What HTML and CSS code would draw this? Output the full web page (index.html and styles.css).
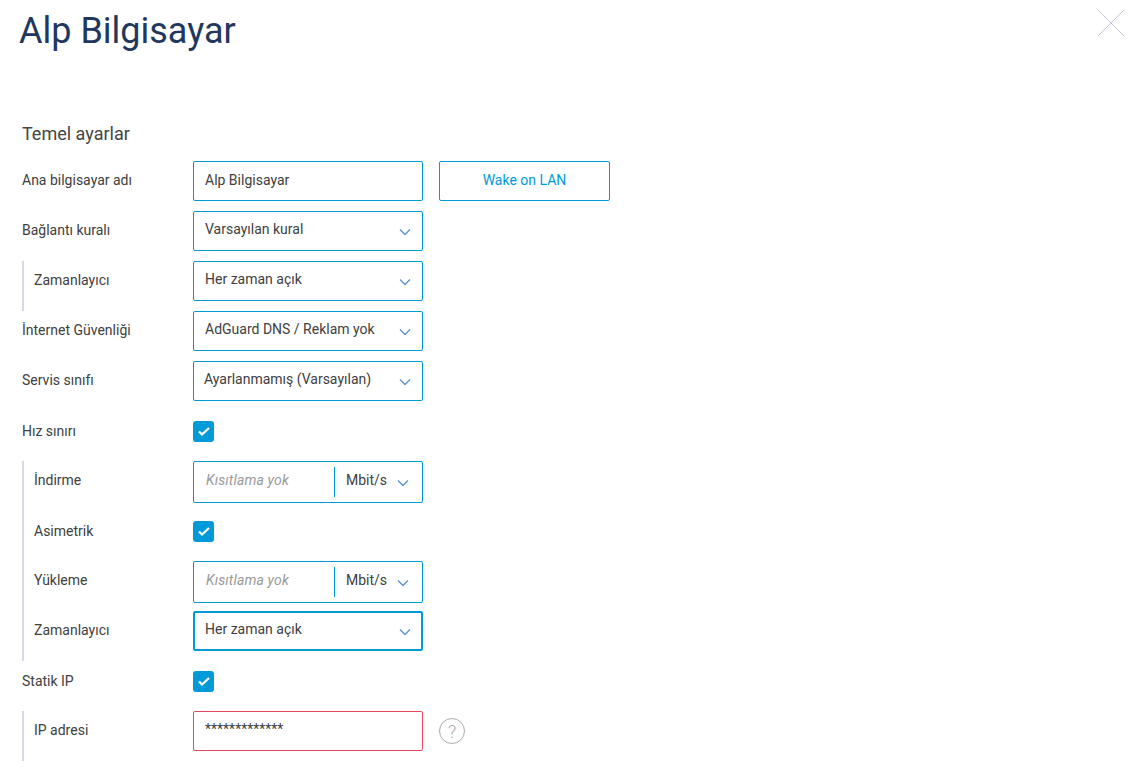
FILE: index.html
```html
<!DOCTYPE html>
<html lang="tr">
<head>
    <meta charset="UTF-8">
    <meta name="viewport" content="width=device-width, initial-scale=1.0">
    <title>Alp Bilgisayar</title>
    <link rel="stylesheet" href="styles.css">
</head>
<body>
    <header class="header">
        <h1>Alp Bilgisayar</h1>
        <button class="close" aria-label="Kapat">
            <svg width="28" height="28" viewBox="0 0 28 28"><path d="M1 1 27 27M27 1 1 27"/></svg>
        </button>
    </header>

    <h2>Temel ayarlar</h2>

    <div class="row">
        <label>Ana bilgisayar adı</label>
        <input class="field" type="text" value="Alp Bilgisayar">
        <button class="btn">Wake on LAN</button>
    </div>
    <div class="row">
        <label>Bağlantı kuralı</label>
        <div class="field select"><span>Varsayılan kural</span><svg class="chevron" width="12" height="8" viewBox="0 0 12 8"><path d="M1 1.5 6 6.5 11 1.5"/></svg></div>
    </div>
    <div class="group">
        <div class="row">
            <label>Zamanlayıcı</label>
            <div class="field select"><span>Her zaman açık</span><svg class="chevron" width="12" height="8" viewBox="0 0 12 8"><path d="M1 1.5 6 6.5 11 1.5"/></svg></div>
        </div>
    </div>
    <div class="row">
        <label>İnternet Güvenliği</label>
        <div class="field select"><span>AdGuard DNS / Reklam yok</span><svg class="chevron" width="12" height="8" viewBox="0 0 12 8"><path d="M1 1.5 6 6.5 11 1.5"/></svg></div>
    </div>
    <div class="row">
        <label>Servis sınıfı</label>
        <div class="field select native"><span>Ayarlanmamış (Varsayılan)</span><svg class="chevron" width="12" height="8" viewBox="0 0 12 8"><path d="M1 1.5 6 6.5 11 1.5"/></svg></div>
    </div>
    <div class="row toggle">
        <label>Hız sınırı</label>
        <span class="check"><svg width="13" height="11" viewBox="0 0 13 11"><path d="M2 5.5 5 8.5 12 2"/></svg></span>
    </div>
    <div class="group">
        <div class="row tall">
            <label>İndirme</label>
            <div class="field speed">
                <input type="text" placeholder="Kısıtlama yok">
                <div class="unit"><span>Mbit/s</span><svg class="chevron" width="12" height="8" viewBox="0 0 12 8"><path d="M1 1.5 6 6.5 11 1.5"/></svg></div>
            </div>
        </div>
        <div class="row toggle">
            <label>Asimetrik</label>
            <span class="check"><svg width="13" height="11" viewBox="0 0 13 11"><path d="M2 5.5 5 8.5 12 2"/></svg></span>
        </div>
        <div class="row tall">
            <label>Yükleme</label>
            <div class="field speed">
                <input type="text" placeholder="Kısıtlama yok">
                <div class="unit"><span>Mbit/s</span><svg class="chevron" width="12" height="8" viewBox="0 0 12 8"><path d="M1 1.5 6 6.5 11 1.5"/></svg></div>
            </div>
        </div>
        <div class="row">
            <label>Zamanlayıcı</label>
            <div class="field select focused"><span>Her zaman açık</span><svg class="chevron" width="12" height="8" viewBox="0 0 12 8"><path d="M1 1.5 6 6.5 11 1.5"/></svg></div>
        </div>
    </div>
    <div class="row toggle">
        <label>Statik IP</label>
        <span class="check"><svg width="13" height="11" viewBox="0 0 13 11"><path d="M2 5.5 5 8.5 12 2"/></svg></span>
    </div>
    <div class="group">
        <div class="row">
            <label>IP adresi</label>
            <input class="field error" type="text" value="*************">
            <span class="help">?</span>
        </div>
    </div>
</body>
</html>
```

FILE: styles.css
```css
* {
    box-sizing: border-box;
}
body {
    font-family: Roboto, "Liberation Sans", sans-serif;
    font-size: 14px;
    color: #404040;
    background-color: white;
    margin: 0;
    padding: 0 22px;
}
.header {
    display: flex;
    justify-content: space-between;
    height: 122px;
    padding-top: 8px;
}
h1 {
    font-size: 36px;
    font-weight: 400;
    line-height: 46px;
    color: #223760;
    margin: 0 0 0 -3px;
}
.close {
    width: 28px;
    height: 28px;
    padding: 0;
    margin: 1px -17px 0 0;
    border: none;
    background: none;
}
.close path {
    fill: none;
    stroke: #c3c6d8;
    stroke-width: 1;
}
h2 {
    font-size: 18px;
    font-weight: 400;
    line-height: 24px;
    color: #444;
    margin: 0 0 15px;
}
.row {
    display: flex;
    align-items: center;
    height: 40px;
    margin-bottom: 10px;
}
.row label {
    width: 171px;
    flex: none;
    padding-bottom: 2px;
}
.row.toggle label {
    padding-bottom: 0;
}
.group {
    display: flow-root;
    border-left: 2px solid #d5d8e8;
    padding-left: 10px;
}
.group .row label {
    width: 159px;
}
.row.tall {
    height: 42px;
    margin-bottom: 8px;
}
.row.tall label {
    padding-bottom: 4px;
}
.field {
    width: 230px;
    height: 40px;
    border: 1px solid #009ad9;
    border-radius: 2px;
    background: white;
    color: #404040;
    font-family: inherit;
    font-size: 14px;
    padding: 0 11px 2px;
    outline: none;
}
.field.error {
    border-color: #e8485f;
    padding-bottom: 4px;
}
.select {
    display: flex;
    align-items: center;
    justify-content: space-between;
    padding-bottom: 5px;
}
.select.native {
    padding-left: 10px;
}
.select.focused {
    border-width: 2px;
    padding: 0 10px 5px;
}
.chevron {
    position: relative;
    top: 3px;
    flex: none;
}
.chevron path {
    fill: none;
    stroke: #5f93cf;
    stroke-width: 1.4;
}
.btn {
    width: 171px;
    height: 40px;
    margin-left: 16px;
    padding-bottom: 3px;
    border: 1px solid #009ad9;
    border-radius: 2px;
    background: white;
    color: #009ad9;
    font-family: inherit;
    font-size: 14px;
}
.check {
    width: 21px;
    height: 21px;
    border-radius: 3px;
    background-color: #009ad9;
    display: flex;
    align-items: center;
    justify-content: center;
}
.check path {
    fill: none;
    stroke: white;
    stroke-width: 2.3;
}
.speed {
    display: flex;
    align-items: center;
    height: 42px;
    padding: 0;
}
.speed input {
    width: 141px;
    height: 30px;
    border: none;
    border-right: 1px solid #009ad9;
    padding: 0 11px 4px 12px;
    font-family: inherit;
    font-size: 14px;
    letter-spacing: 0.15px;
    outline: none;
}
.speed input::placeholder {
    font-style: italic;
    color: #999;
    opacity: 1;
}
.unit {
    flex: 1;
    display: flex;
    align-items: center;
    justify-content: space-between;
    padding: 0 13px 4px 11px;
}
.help {
    width: 26px;
    height: 26px;
    margin-left: 16px;
    border: 1px solid #aaa;
    border-radius: 50%;
    color: #aaa;
    font-size: 18px;
    font-weight: 300;
    display: flex;
    align-items: center;
    justify-content: center;
}
```
